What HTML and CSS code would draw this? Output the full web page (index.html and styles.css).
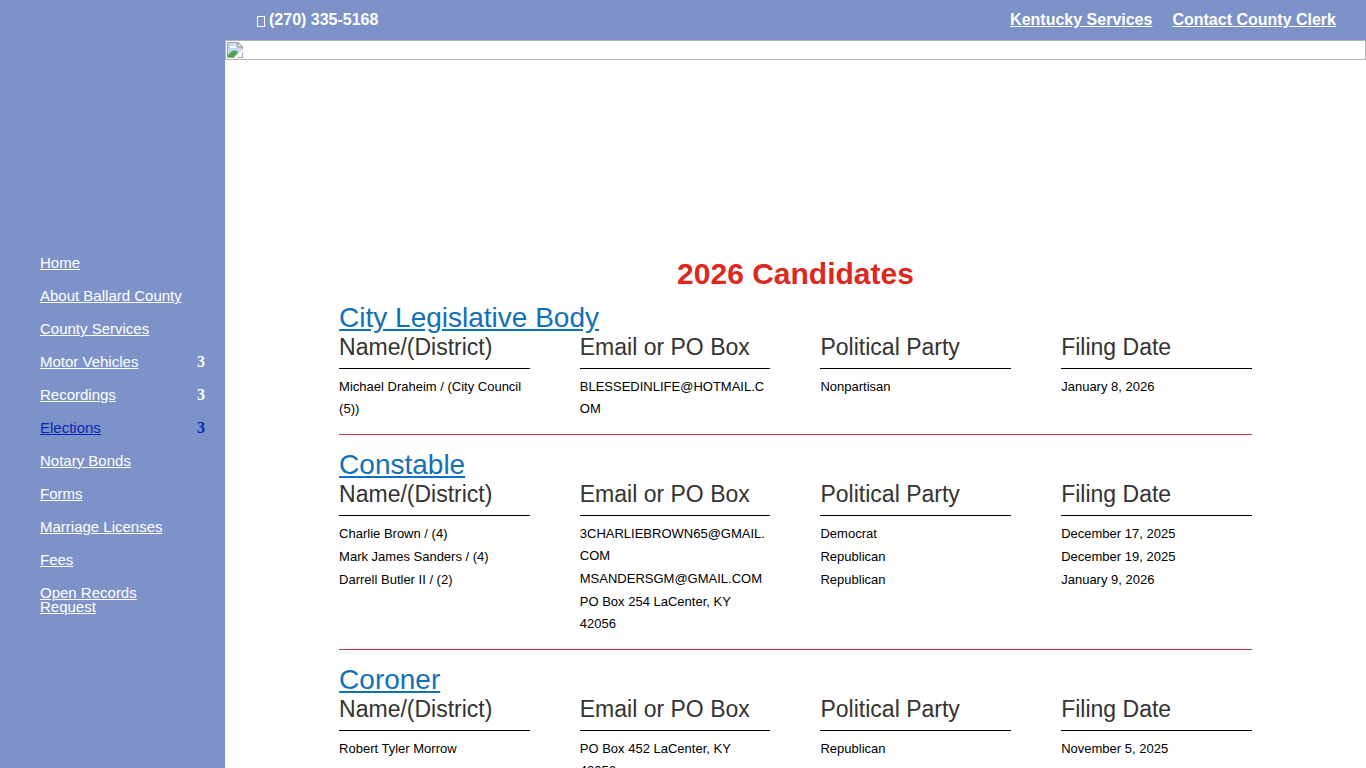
FILE: index.html
```
<!DOCTYPE html>
<html lang="en">
<head>
  <meta charset="UTF-8">
  <meta name="viewport" content="width=device-width, initial-scale=1.0">
  <title>2026 Candidates</title>
  <link rel="stylesheet" href="styles.css">
</head>
<body>
  <aside class="sidebar">
    <nav>
      <ul class="menu">
        <li><a href="#">Home</a></li>
        <li><a href="#">About Ballard County</a></li>
        <li><a href="#">County Services</a></li>
        <li><a href="#">Motor Vehicles</a><span class="count">3</span></li>
        <li><a href="#">Recordings</a><span class="count">3</span></li>
        <li class="active"><a href="#">Elections</a><span class="count">3</span></li>
        <li><a href="#">Notary Bonds</a></li>
        <li><a href="#">Forms</a></li>
        <li><a href="#">Marriage Licenses</a></li>
        <li><a href="#">Fees</a></li>
        <li><a href="#">Open Records Request</a></li>
      </ul>
    </nav>
  </aside>

  <div class="page">
    <header class="topbar">
      <div class="phone"><span class="phone-icon"></span>(270) 335-5168</div>
      <div class="top-links">
        <a href="#">Kentucky Services</a>
        <a href="#">Contact County Clerk</a>
      </div>
    </header>

    <div class="banner">
      <svg width="16" height="16" viewBox="0 0 16 16">
        <path d="M0.5 15.5V0.5H11L15.5 5V15.5Z" fill="#fff" stroke="#a3a3a3"/>
        <path d="M1 1H11V5H15V8L8 15H1Z" fill="#c6d7f5"/>
        <path d="M3 6a2 2 0 0 1 3-2 2 2 0 0 1 3 2Z" fill="#fff"/>
        <path d="M1 15V13Q5 8 8 8.500Q10 8.500 11 10.500L7 15Z" fill="#4fa345"/>
        <path d="M11 0.500V5H15.500Z" fill="#fff" stroke="#8c8c8c"/>
        <path d="M7 16L16 7V10L10 16Z" fill="#fff"/>
      </svg>
    </div>

    <main class="content">
      <h1>2026 Candidates</h1>

      <section class="office">
        <h2><a href="#">City Legislative Body</a></h2>
        <div class="columns">
          <div>
            <h3>Name/(District)</h3>
            <ul>
              <li>Michael Draheim / (City Council (5))</li>
            </ul>
          </div>
          <div>
            <h3>Email or PO Box</h3>
            <ul>
              <li>BLESSEDINLIFE@HOTMAIL.COM</li>
            </ul>
          </div>
          <div>
            <h3>Political Party</h3>
            <ul>
              <li>Nonpartisan</li>
            </ul>
          </div>
          <div>
            <h3>Filing Date</h3>
            <ul>
              <li>January 8, 2026</li>
            </ul>
          </div>
        </div>
      </section>

      <section class="office">
        <h2><a href="#">Constable</a></h2>
        <div class="columns">
          <div>
            <h3>Name/(District)</h3>
            <ul>
              <li>Charlie Brown / (4)</li>
              <li>Mark James Sanders / (4)</li>
              <li>Darrell Butler II / (2)</li>
            </ul>
          </div>
          <div>
            <h3>Email or PO Box</h3>
            <ul>
              <li>3CHARLIEBROWN65@GMAIL.COM</li>
              <li>MSANDERSGM@GMAIL.COM</li>
              <li>PO Box 254 LaCenter, KY 42056</li>
            </ul>
          </div>
          <div>
            <h3>Political Party</h3>
            <ul>
              <li>Democrat</li>
              <li>Republican</li>
              <li>Republican</li>
            </ul>
          </div>
          <div>
            <h3>Filing Date</h3>
            <ul>
              <li>December 17, 2025</li>
              <li>December 19, 2025</li>
              <li>January 9, 2026</li>
            </ul>
          </div>
        </div>
      </section>

      <section class="office">
        <h2><a href="#">Coroner</a></h2>
        <div class="columns">
          <div>
            <h3>Name/(District)</h3>
            <ul>
              <li>Robert Tyler Morrow</li>
            </ul>
          </div>
          <div>
            <h3>Email or PO Box</h3>
            <ul>
              <li>PO Box 452 LaCenter, KY 42056</li>
            </ul>
          </div>
          <div>
            <h3>Political Party</h3>
            <ul>
              <li>Republican</li>
            </ul>
          </div>
          <div>
            <h3>Filing Date</h3>
            <ul>
              <li>November 5, 2025</li>
            </ul>
          </div>
        </div>
      </section>
    </main>
  </div>
</body>
</html>
```
FILE: styles.css
```
* {
  box-sizing: border-box;
}
body {
  margin: 0;
  display: flex;
  align-items: flex-start;
  font-family: "Liberation Sans", Arial, sans-serif;
  font-size: 13px;
  color: #000;
  background: #fff;
}
ul {
  list-style: none;
  margin: 0;
  padding: 0;
}
h1, h2, h3 {
  margin: 0;
}

/* left menu */
.sidebar {
  position: sticky;
  top: 0;
  flex: 0 0 225px;
  height: 100vh;
  padding: 256px 20px 0 40px;
  background: #7d92c9;
}
.menu li {
  display: flex;
  justify-content: space-between;
  margin-bottom: 19px;
  font-size: 15px;
  line-height: 14px;
  color: #fff;
}
.menu a {
  max-width: 145px;
  color: inherit;
}
.menu .active {
  color: #0a28b0;
}
.count {
  font-family: "Liberation Serif", "Times New Roman", serif;
  font-size: 16px;
  font-weight: bold;
}

.page {
  flex: 1;
  min-width: 0;
}

/* top bar */
.topbar {
  display: flex;
  justify-content: space-between;
  align-items: center;
  height: 40px;
  padding: 0 30px 0 32px;
  font-size: 16px;
  font-weight: bold;
  color: #fff;
  background: #7d92c9;
}
.phone {
  display: flex;
  align-items: center;
  gap: 4px;
}
.phone-icon {
  width: 8px;
  height: 11px;
  margin-top: 3px;
  border: 1px solid #fff;
}
.top-links {
  display: flex;
  gap: 20px;
}
.top-links a {
  color: #fff;
}

.banner {
  height: 20px;
  padding: 1px;
  border: 1px solid #b4b4b4;
}
.banner svg {
  display: block;
}

/* candidates */
.content {
  width: 80%;
  margin: 0 auto;
  padding-top: 196px;
}
h1 {
  margin-bottom: 11px;
  font-size: 30px;
  line-height: 36px;
  text-align: center;
  color: #dd2820;
}
.office {
  margin-bottom: 15px;
  padding-bottom: 13px;
  border-bottom: 1px solid #c43545;
}
.office h2 {
  font-size: 28px;
  font-weight: normal;
  line-height: 30px;
}
.office h2 a {
  color: #1270b8;
}
.columns {
  display: grid;
  grid-template-columns: repeat(4, minmax(0, 1fr));
  gap: 50px;
}
.columns h3 {
  margin-bottom: 7px;
  padding-bottom: 7px;
  border-bottom: 1px solid #000;
  font-size: 23px;
  font-weight: normal;
  line-height: 28px;
  color: #333;
}
.columns li {
  margin-bottom: 1px;
  padding-right: 4px;
  line-height: 22px;
  overflow-wrap: anywhere;
}
```
